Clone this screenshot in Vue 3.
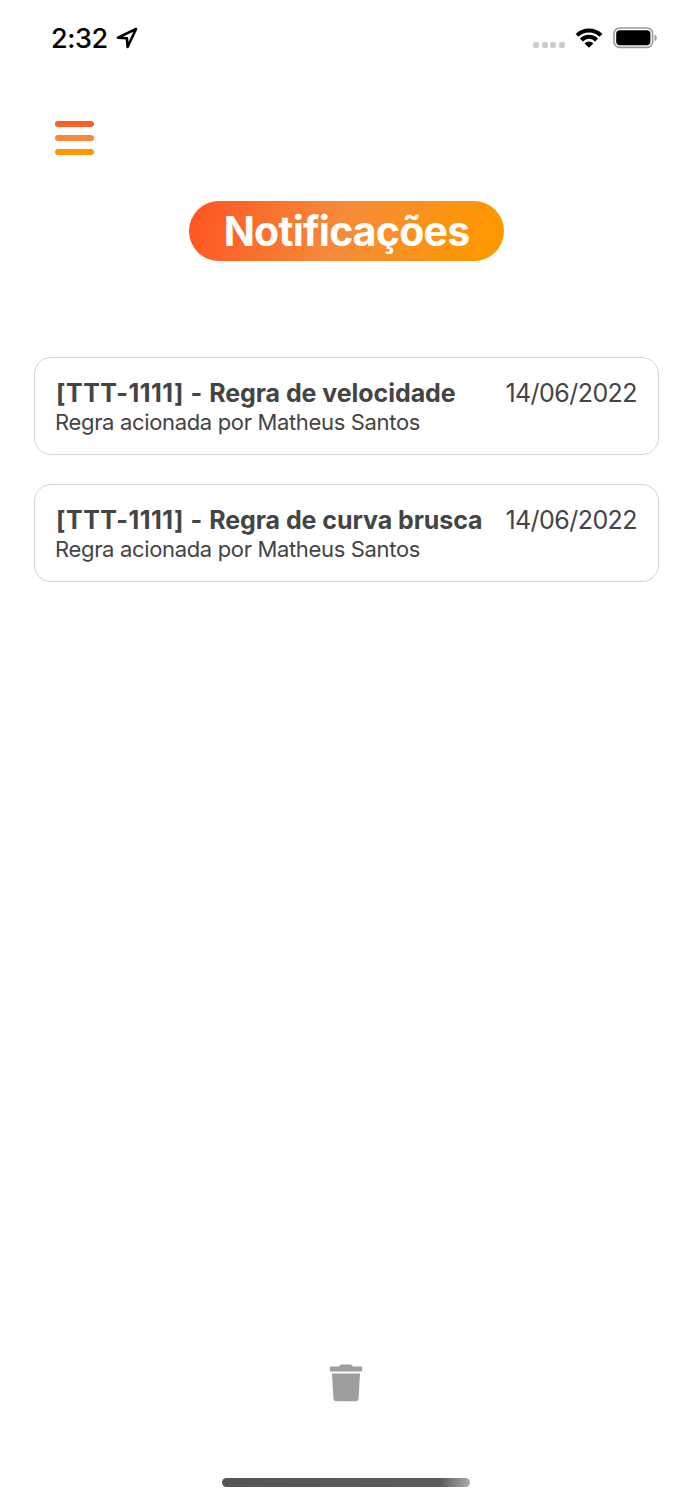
<template>
  <div class="screen">
    <!-- Barra de status -->
    <header class="status-bar">
      <div class="status-left">
        <span class="clock">2:32</span>
        <svg class="location-icon" viewBox="0 0 22 22">
          <path d="M20 2 L2 10.6 L10.9 11.2 L11.6 20 Z" />
        </svg>
      </div>
      <div class="status-right">
        <div class="signal">
          <span v-for="n in 4" :key="n" class="signal-dot"></span>
        </div>
        <svg class="wifi-icon" viewBox="0 0 28 20">
          <path class="arc" d="M2 7.4 A17 17 0 0 1 26 7.4" />
          <path class="arc" d="M6.4 12 A10.8 10.8 0 0 1 21.6 12" />
          <path d="M14 19.8 L9.6 15.4 A6.2 6.2 0 0 1 18.4 15.4 Z" />
        </svg>
        <svg class="battery-icon" viewBox="0 0 44 22">
          <rect class="battery-case" x="1" y="1" width="38.6" height="19.4" rx="5.6" />
          <rect x="3.2" y="3.2" width="34.2" height="15" rx="3.6" />
          <path class="battery-tip" d="M41.6 7.2 Q43.8 8.2 43.8 10.7 Q43.8 13.2 41.6 14.2 Z" />
        </svg>
      </div>
    </header>

    <button class="menu-button" aria-label="Menu" @click="toggleMenu">
      <span class="menu-line line-top"></span>
      <span class="menu-line line-middle"></span>
      <span class="menu-line line-bottom"></span>
    </button>

    <h1 class="page-title">Notificações</h1>

    <!-- Lista de notificações -->
    <main class="notification-list">
      <article v-for="item in notifications" :key="item.id" class="notification-card">
        <div class="card-header">
          <span class="card-title"><span class="plate">[{{ item.plate }}] - </span>{{ item.rule }}</span>
          <span class="card-date">{{ item.date }}</span>
        </div>
        <p class="card-text">{{ item.description }}</p>
      </article>
    </main>

    <footer class="footer">
      <button class="delete-button" aria-label="Excluir notificações" @click="clearNotifications">
        <svg class="trash-icon" viewBox="0 0 34 38">
          <path d="M1.6 2.4 H10 L11 1.2 Q11.6 .5 12.6 .5 H21.4 Q22.4 .5 23 1.2 L24 2.4 H32.4 Q33.2 2.4 33.2 3.2 V6.6 Q33.2 7.4 32.4 7.4 H1.6 Q.8 7.4 .8 6.6 V3.2 Q.8 2.4 1.6 2.4 Z" />
          <path d="M3 9.4 H31 L29.6 34 Q29.3 37.3 26.2 37.3 H7.8 Q4.7 37.3 4.4 34 Z" />
        </svg>
      </button>
      <div class="home-indicator"></div>
    </footer>
  </div>
</template>

<script setup>
import { ref } from 'vue'

const menuOpen = ref(false)

const notifications = ref([
  {
    id: 1,
    plate: 'TTT-1111',
    rule: 'Regra de velocidade',
    description: 'Regra acionada por Matheus Santos',
    date: '14/06/2022'
  },
  {
    id: 2,
    plate: 'TTT-1111',
    rule: 'Regra de curva brusca',
    description: 'Regra acionada por Matheus Santos',
    date: '14/06/2022'
  }
])

const toggleMenu = () => {
  menuOpen.value = !menuOpen.value
}

const clearNotifications = () => {
  notifications.value = []
}
</script>

<style>
body {
  margin: 0;
  background: #fff;
}
</style>

<style scoped>
.screen {
  display: flex;
  flex-direction: column;
  box-sizing: border-box;
  width: 100%;
  height: 1500px;
  background: #fff;
  color: #444;
  font-family: Inter, "Liberation Sans", sans-serif;
}

button {
  padding: 0;
  border: none;
  background: none;
  cursor: pointer;
}

/* Barra de status */
.status-bar {
  display: flex;
  justify-content: space-between;
  align-items: center;
  height: 76px;
  padding: 0 36px 0 51px;
  color: #000;
}

.status-left,
.status-right {
  display: flex;
  align-items: center;
}

.status-left {
  gap: 8px;
}

.clock {
  padding-top: 2px;
  font-size: 27px;
  font-weight: 500;
  line-height: 32px;
  letter-spacing: -0.4px;
}

.location-icon {
  width: 22px;
  height: 22px;
  fill: none;
  stroke: #000;
  stroke-width: 2.6;
  stroke-linejoin: round;
}

.signal {
  display: flex;
  gap: 2.6px;
  margin: 13px 10px 0 0;
}

.signal-dot {
  width: 6px;
  height: 6px;
  border-radius: 2px;
  background: #ccc;
}

.wifi-icon {
  width: 28px;
  height: 20px;
  margin-right: 10px;
}

.arc {
  fill: none;
  stroke: #000;
  stroke-width: 4;
}

.battery-icon {
  width: 44px;
  height: 22px;
}

.battery-case {
  fill: none;
  stroke: #999;
  stroke-width: 1.6;
}

.battery-tip {
  fill: #999;
}

/* Menu */
.menu-button {
  display: flex;
  flex-direction: column;
  gap: 8px;
  width: 39px;
  margin: 45px 0 0 55px;
}

.menu-line {
  width: 39px;
  height: 6px;
  border-radius: 3px;
}

.line-top {
  background: linear-gradient(#ff5722, #fd662a);
}

.line-middle {
  background: #fa8638;
}

.line-bottom {
  background: #ff9800;
}

/* Título */
.page-title {
  display: flex;
  justify-content: center;
  align-items: center;
  align-self: center;
  width: 315px;
  height: 60px;
  margin: 46px 0 0;
  border-radius: 30px;
  background: linear-gradient(105deg, #ff5722 3%, #f68b39 48%, #ff9800 94%);
  color: #fff;
  font-size: 41px;
  font-weight: 700;
  letter-spacing: -0.8px;
  white-space: nowrap;
}

/* Lista de notificações */
.notification-list {
  display: flex;
  flex-direction: column;
  gap: 28.5px;
  margin: 96px 34px 0;
}

.notification-card {
  box-sizing: border-box;
  height: 98px;
  padding: 20px 21px 0 20px;
  border: 1px solid #d3d3d3;
  border-radius: 17px;
}

.card-header {
  display: flex;
  justify-content: space-between;
  padding-left: 1px;
  font-size: 25px;
  line-height: 31px;
  white-space: nowrap;
}

.card-title {
  font-weight: 700;
  letter-spacing: -0.06px;
}

.plate {
  letter-spacing: 0.52px;
}

.card-date {
  letter-spacing: -0.55px;
}

.card-text {
  margin: 0;
  font-size: 22px;
  line-height: 26px;
  letter-spacing: -0.34px;
}

/* Rodapé */
.footer {
  display: flex;
  flex-direction: column;
  align-items: center;
  margin-top: auto;
  padding-bottom: 13px;
}

.delete-button {
  height: 38px;
  margin: 0 1px 76px 0;
}

.trash-icon {
  display: block;
  width: 34px;
  height: 38px;
  fill: #9e9e9e;
}

.home-indicator {
  width: 248px;
  height: 9px;
  margin-right: 1px;
  border-radius: 5px;
  background: linear-gradient(90deg, #555 0%, #5c5c5c 88%, #aaa 100%);
}
</style>
